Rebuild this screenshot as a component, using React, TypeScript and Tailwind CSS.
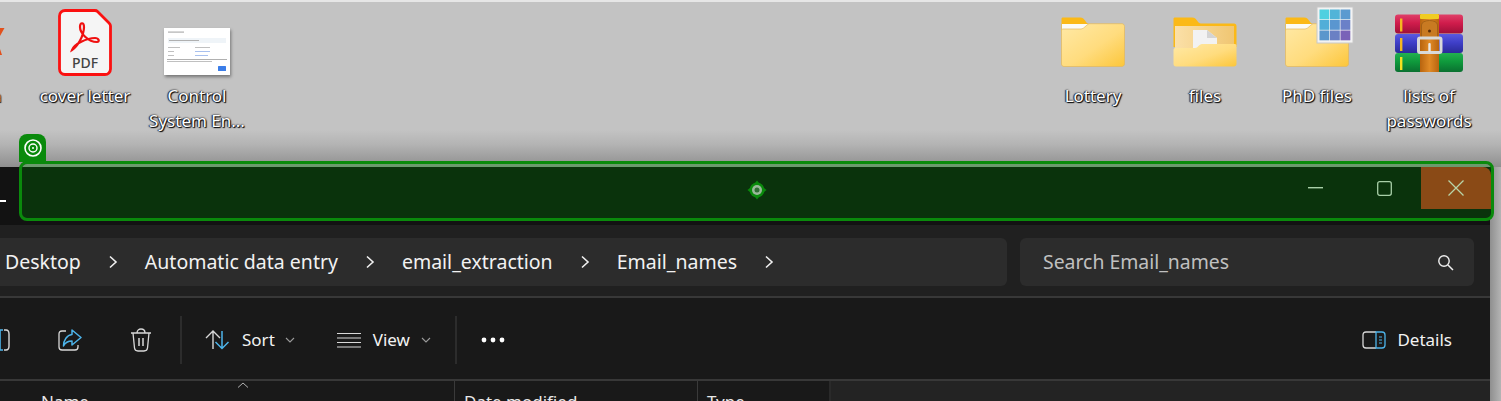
import React from "react";

const font = { fontFamily: '"Noto Sans", "Open Sans", sans-serif' };

function DesktopIcon({ icon, label }: { icon: React.ReactNode; label: string[] }) {
  return (
    <div className="flex w-[112px] shrink-0 flex-col items-center">
      <div className="flex h-[81px] items-center justify-center">{icon}</div>
      {label.map((l) => (
        <div
          key={l}
          className="h-[25px] whitespace-nowrap text-[17px] leading-[25px] text-white [text-shadow:1px_1px_1px_#000,-1px_0_1px_#223,0_0_2px_#000]"
        >
          {l}
        </div>
      ))}
    </div>
  );
}

function PdfIcon() {
  return (
    <div className="relative h-[67px] w-[54px]">
      <svg width="54" height="67" viewBox="0 0 54 67" className="absolute inset-0">
        <path d="M7 1.5H37C38 1.5 39 2 39.5 2.5L51 14C52 15 52.5 16 52.5 17V60a5.5 5.5 0 0 1-5.5 5.5H7A5.5 5.5 0 0 1 1.5 60V7A5.5 5.5 0 0 1 7 1.5Z" fill="#f5f5f5" stroke="#fb1010" strokeWidth="2.8" />
        <path d="M14 41C19 38 26 27 26 18C26 13 22 13 22 18C22 24 30 33 39 33C42 33 41 29 37 29C29 29 16 35 14 41Z" fill="none" stroke="#f01010" strokeWidth="2.2" />
      </svg>
      <span className="absolute left-0 right-0 top-[44px] text-center text-[14px] font-medium leading-[20px] text-[#444444]">PDF</span>
    </div>
  );
}

function Thumbnail() {
  return (
    <svg width="66" height="47" viewBox="0 0 66 47" className="mt-[18px] shadow-[1px_2px_3px_rgba(0,0,0,.4)]">
      <rect width="66" height="47" fill="#fff" />
      <rect x="4" y="3.5" width="16" height="1.2" fill="#b0b0b0" />
      <rect x="4" y="10" width="58" height="5" fill="#eff4f8" />
      <rect x="5" y="12" width="30" height="1" fill="#b0b0b0" />
      <rect x="4" y="19" width="12" height="1" fill="#c0c0c0" />
      <rect x="31" y="19" width="15" height="1" fill="#c0c0c0" />
      <rect x="4" y="23" width="6" height="1" fill="#c0c0c0" />
      <rect x="31" y="23" width="15" height="1" fill="#a8c0ee" />
      <rect x="4" y="27" width="6" height="1" fill="#c0c0c0" />
      <rect x="31" y="27" width="13" height="1" fill="#a8c0ee" />
      <rect x="3" y="31" width="60" height="1" fill="#b0b0b0" />
      <rect x="3" y="33" width="45" height="1" fill="#c0c0c0" />
      <rect x="54" y="38" width="8" height="5" rx="0.5" fill="#3b7de8" />
    </svg>
  );
}

function Folder({ id, inner, grid }: { id: string; inner?: boolean; grid?: boolean }) {
  return (
    <svg width="64" height="50" viewBox="0 0 64 50" className="mb-[2px] overflow-visible">
      <defs>
        <linearGradient id={id} x1="0" y1="0" x2="1" y2="1">
          <stop offset="0" stopColor="#ffe9a6" />
          <stop offset="0.55" stopColor="#ffdc7e" />
          <stop offset="1" stopColor="#fcc63a" />
        </linearGradient>
        <linearGradient id={`${id}i`} x1="0" y1="0" x2="1" y2="0">
          <stop offset="0" stopColor="#fbe0a8" />
          <stop offset="1" stopColor="#f0c672" />
        </linearGradient>
      </defs>
      {inner ? (
        <>
          <path d="M2 0.5H19C22 0.5 23 2 24 3.5C25 5 26 6.5 28 6.5H61C62.5 6.5 63.5 7.5 63.5 9V30H0.5V2C0.5 1 1 0.5 2 0.5Z" fill="#fbb917" />
          <rect x="2" y="9" width="59" height="22" fill={`url(#${id}i)`} />
          <path d="M20 13H34L44 21V31H20Z" fill="#f2f2f2" />
          <path d="M34 13L44 21H34Z" fill="#d4d4d4" />
          <path d="M0.5 33C0.5 32 1 31 2 31H22C25 31 26 27 29 27H62C63 27 63.5 28 63.5 29V47C63.5 48.5 62 49.5 61 49.5H3C1.5 49.5 0.5 48.5 0.5 47Z" fill={`url(#${id})`} />
        </>
      ) : (
        <>
          <path d="M2 0.5H19C22 0.5 23 2 24 3.5C25 5 26 6.5 28 7V14H0.5V2C0.5 1 1 0.5 2 0.5Z" fill="#fbb917" />
          <rect x="1" y="7" width="27" height="6" fill="#fbfbf6" />
          <path d="M0.5 14C0.5 13 1 12 2 12H20C23 12 25 8 28 6.7H61C62.5 6.7 63.5 8 63.5 9.5V47C63.5 48.5 62 49.5 61 49.5H3C1.5 49.5 0.5 48.5 0.5 47Z" fill={`url(#${id})`} stroke="#e2b85c" strokeWidth="0.7" />
        </>
      )}
      {grid && (
        <g transform="translate(32,-10)">
          <rect width="36" height="36" fill="#f3f3f3" stroke="#c8c8c8" />
          {[0, 1, 2].map((r) =>
            [0, 1, 2].map((c) => (
              <rect
                key={`${r}${c}`}
                x={2.5 + c * 10.5}
                y={2.5 + r * 10.5}
                width="9.8"
                height="9.8"
                fill={[["#4fd0e0", "#52b4d8", "#5a9ad0"], ["#52aed8", "#5a96d0", "#6a80c8"], ["#5a96cc", "#6a80c4", "#7a62b8"]][r][c]}
              />
            ))
          )}
        </g>
      )}
    </svg>
  );
}

function Rar() {
  const book = (y: number, g: string, s: string) => (
    <g>
      <rect x="0" y={y} width="68" height="19" rx="3" fill={`url(#${g})`} />
      <rect x="5" y={y + 4} width="2.4" height="13" fill={s} />
    </g>
  );
  const grad = (id: string, a: string, b: string, c: string) => (
    <linearGradient id={id} x1="0" y1="0" x2="0" y2="1">
      <stop offset="0" stopColor={a} />
      <stop offset="0.45" stopColor={b} />
      <stop offset="1" stopColor={c} />
    </linearGradient>
  );
  return (
    <svg width="68" height="58" viewBox="0 0 68 58">
      <defs>
        {grad("rr", "#e04068", "#d01c4c", "#a01038")}
        {grad("rb", "#5a5ae0", "#3f3fc8", "#2a2a98")}
        {grad("rg", "#22b050", "#0f9a3c", "#0a7030")}
        <linearGradient id="rbelt" x1="0" y1="0" x2="1" y2="0">
          <stop offset="0" stopColor="#b8640f" />
          <stop offset="0.5" stopColor="#e08a26" />
          <stop offset="1" stopColor="#b8640f" />
        </linearGradient>
      </defs>
      {book(0.5, "rr", "#f4b820")}
      {book(20, "rb", "#f4b820")}
      {book(39, "rg", "#f4e020")}
      <rect x="25" y="0" width="19" height="58" fill="url(#rbelt)" />
      <rect x="25" y="0" width="19" height="5" rx="1" fill="#f0cc22" />
      <path d="M26.5 24V11C26.5 5 42.5 5 42.5 11V24Z" fill="#c87a22" stroke="#9a5a14" strokeWidth="0.8" />
      <circle cx="34.5" cy="17" r="1.5" fill="#5a2c08" />
      <rect x="23.5" y="24" width="22.5" height="14.5" rx="1.5" fill="none" stroke="#d8d8d8" strokeWidth="3" />
      <rect x="33.3" y="29" width="2.4" height="9" rx="1" fill="#e8e8e8" />
    </svg>
  );
}

function Chevron() {
  return (
    <svg width="10" height="14" viewBox="0 0 10 14" className="shrink-0">
      <path d="M2 1.5L8 7L2 12.5" fill="none" stroke="#f0f0f0" strokeWidth="1.6" />
    </svg>
  );
}

function SmallChevron() {
  return (
    <svg width="10" height="6" viewBox="0 0 10 6" className="shrink-0">
      <path d="M1 1L5 5L9 1" fill="none" stroke="#9a9a9a" strokeWidth="1.1" />
    </svg>
  );
}

function Sep() {
  return <div className="h-[48px] w-[2px] shrink-0 bg-[#2c2c2c]" />;
}

export default function App() {
  return (
    <div style={font} className="relative flex h-[401px] w-[1501px] flex-col overflow-hidden bg-[linear-gradient(to_right,#8f8f8f_1490px,#b4b4b4_1501px)]">
      <div className="h-[167px] shrink-0 overflow-hidden border-t-2 border-[#e6e6e6] bg-[linear-gradient(to_bottom,#c3c3c3_0,#c3c3c3_128px,#b4b4b4_142px,#8f8f8f_165px)]">
        <div className="flex justify-between pr-[16px]">
          <div className="flex">
            <div className="relative w-[29px] shrink-0 overflow-hidden">
              <svg width="5" height="28" viewBox="0 0 5 28" className="absolute left-0 top-[26px]">
                <path d="M0 0H4.5L0 8Z M0 21L2 27H0Z" fill="#e2501c" />
              </svg>
              <span className="absolute left-[-8px] top-[81px] text-[17px] leading-[25px] text-white [text-shadow:1px_1px_1px_#000]">a</span>
            </div>
            <DesktopIcon icon={<PdfIcon />} label={["cover letter"]} />
            <DesktopIcon icon={<Thumbnail />} label={["Control", "System En..."]} />
          </div>
          <div className="flex">
            <DesktopIcon icon={<Folder id="f1" />} label={["Lottery"]} />
            <DesktopIcon icon={<Folder id="f2" inner />} label={["files"]} />
            <DesktopIcon icon={<Folder id="f3" grid />} label={["PhD files"]} />
            <DesktopIcon icon={<Rar />} label={["lists of", "passwords"]} />
          </div>
        </div>
      </div>

      <div className="flex w-[1490px] flex-1 flex-col bg-[#1c1c1c] text-[#f2f2f2]">
        <div className="flex h-[58px] shrink-0 items-center bg-[#121212]">
          <div className="mt-[10px] h-[2px] w-[6px] bg-white" />
        </div>

        <div className="flex h-[73px] shrink-0 items-start gap-[13px] border-b-2 border-[#383838] bg-[#202020] pr-[16px] pt-[13px]">
          <div className="flex h-[48px] flex-1 items-center gap-[27px] rounded-r-[6px] bg-[#2c2c2c] pl-[5px] text-[19.5px]">
            <span>Desktop</span>
            <Chevron />
            <span>Automatic data entry</span>
            <Chevron />
            <span>email_extraction</span>
            <Chevron />
            <span>Email_names</span>
            <Chevron />
          </div>
          <div className="flex h-[48px] w-[454px] items-center justify-between rounded-[6px] bg-[#2c2c2c] pl-[23px] pr-[20px] text-[19.4px] text-[#c0c0c0]">
            <span>Search Email_names</span>
            <svg width="17" height="17" viewBox="0 0 17 17">
              <circle cx="7" cy="7" r="5.2" fill="none" stroke="#f0f0f0" strokeWidth="1.4" />
              <path d="M11 11L16 16" stroke="#f0f0f0" strokeWidth="1.5" />
            </svg>
          </div>
        </div>

        <div className="flex h-[83px] shrink-0 items-center border-b-2 border-[#383838] bg-[#191919] pr-[38px] pt-[2px] text-[17px]">
          <svg width="10" height="24" viewBox="0 0 10 24" className="shrink-0">
            <path d="M3 2H0V22H3" fill="none" stroke="#4db4ea" strokeWidth="1.6" />
            <path d="M4 2H6C8 2 9 4 9 6V18C9 20 8 22 6 22H4" fill="none" stroke="#d8d8d8" strokeWidth="1.4" />
          </svg>
          <svg width="24" height="24" viewBox="0 0 24 24" className="ml-[48px] shrink-0">
            <path d="M8 3H4C2 3 1 4 1 6V19C1 21 2 22 4 22H17C19 22 20 21 20 19V17" fill="none" stroke="#d8d8d8" strokeWidth="1.3" />
            <path d="M14 2L23 9.5L14 17V13C10 13 7 15 5.5 18C5.5 12 9 7 14 6.5Z" fill="none" stroke="#4db4ea" strokeWidth="1.5" strokeLinejoin="round" />
          </svg>
          <svg width="22" height="24" viewBox="0 0 22 24" className="ml-[48px] shrink-0">
            <path d="M1 5H21M7 5C7 2 9 1 11 1C13 1 15 2 15 5M3 5L4.5 20C4.7 22 6 23 8 23H14C16 23 17.3 22 17.5 20L19 5" fill="none" stroke="#d8d8d8" strokeWidth="1.3" />
            <path d="M9 10V18M13 10V18" stroke="#d8d8d8" strokeWidth="1.5" />
          </svg>
          <div className="ml-[28px]"><Sep /></div>
          <svg width="25" height="20" viewBox="0 0 25 20" className="ml-[23px] shrink-0">
            <path d="M8 19V1.5M1 8L8 1L15 8" fill="none" stroke="#d8d8d8" strokeWidth="1.4" />
            <path d="M17 1V18.5M10.5 12L17 18.5L23.5 12" fill="none" stroke="#4db4ea" strokeWidth="1.5" />
          </svg>
          <span className="ml-[12px]">Sort</span>
          <div className="ml-[10px]"><SmallChevron /></div>
          <svg width="24" height="16" viewBox="0 0 24 16" className="ml-[42px] shrink-0">
            <path d="M0 1.5H24M0 6H24M0 10.5H24M0 15H24" stroke="#d8d8d8" strokeWidth="1.2" />
          </svg>
          <span className="ml-[12px]">View</span>
          <div className="ml-[11px]"><SmallChevron /></div>
          <div className="ml-[24px]"><Sep /></div>
          <svg width="24" height="6" viewBox="0 0 24 6" className="ml-[24px] shrink-0">
            <circle cx="3" cy="3" r="2.4" fill="#fff" />
            <circle cx="12" cy="3" r="2.4" fill="#fff" />
            <circle cx="21" cy="3" r="2.4" fill="#fff" />
          </svg>
          <div className="flex-1" />
          <svg width="24" height="18" viewBox="0 0 24 18" className="shrink-0">
            <path d="M14 1H4C2 1 1 2 1 4V14C1 16 2 17 4 17H14" fill="none" stroke="#d8d8d8" strokeWidth="1.3" />
            <path d="M14 1H20C22 1 23 2 23 4V14C23 16 22 17 20 17H14Z" fill="none" stroke="#4db4ea" strokeWidth="1.3" />
            <path d="M17 6H20M17 9H20M17 12H20" stroke="#4db4ea" strokeWidth="1.2" />
          </svg>
          <span className="ml-[11px]">Details</span>
        </div>

        <div className="flex flex-1 overflow-hidden bg-[#232323] text-[17px] leading-[24px] text-[#e8e8e8]">
          <div className="relative w-[455px] shrink-0 border-r border-[#3a3a3a] bg-[#191919] pl-[41px] pt-[9px]">
            Name
            <svg width="12" height="6" viewBox="0 0 12 6" className="absolute left-[237px] top-[1px]">
              <path d="M1 5.5L6 1L11 5.5" fill="none" stroke="#b0b0b0" strokeWidth="1" />
            </svg>
          </div>
          <div className="w-[243px] shrink-0 border-r border-[#3a3a3a] bg-[#191919] pl-[9px] pt-[9px]">Date modified</div>
          <div className="w-[133px] shrink-0 border-r-2 border-[#2a2a2a] bg-[#191919] pl-[9px] pt-[9px]">Type</div>
        </div>
      </div>

      <div className="absolute left-[19px] top-[134px] flex h-[28px] w-[27px] items-center justify-center rounded-t-[8px] bg-[#0a8a0c]">
        <svg width="20" height="20" viewBox="0 0 20 20">
          <circle cx="10" cy="10" r="8" fill="none" stroke="#fff" strokeWidth="1.6" />
          <circle cx="10" cy="10" r="4" fill="none" stroke="#fff" strokeWidth="1.4" />
          <circle cx="10" cy="10" r="1" fill="#fff" />
        </svg>
      </div>

      <div className="absolute left-[19px] top-[161px] flex h-[60px] w-[1475px] flex-col overflow-hidden rounded-[8px] border-[3px] border-[#0a8a0c] bg-[#0a330c]">
        <div className="h-[3px] shrink-0 bg-[#6c9a6e]" />
        <div className="flex flex-1 items-start justify-end">
          <svg width="15" height="2" viewBox="0 0 15 2" className="mr-[54px] mt-[20px]">
            <rect width="15" height="1.4" fill="#a8cfa8" />
          </svg>
          <svg width="15" height="15" viewBox="0 0 15 15" className="mr-[29px] mt-[14px]">
            <rect x="0.7" y="0.7" width="13.6" height="13.6" rx="2" fill="none" stroke="#a8cfa8" strokeWidth="1.3" />
          </svg>
          <div className="flex h-[42px] w-[70px] items-center justify-center rounded-tr-[8px] bg-[#8a4a16]">
            <svg width="16" height="16" viewBox="0 0 16 16">
              <path d="M0.5 0.5L15.5 15.5M15.5 0.5L0.5 15.5" stroke="#b8d4a8" strokeWidth="1.3" />
            </svg>
          </div>
        </div>
      </div>

      <svg width="20" height="20" viewBox="0 0 20 20" className="absolute left-[747px] top-[180px]">
        <path d="M10 0.5L12 3H8ZM10 19.5L8 17H12ZM0.5 10L3 8V12ZM19.5 10L17 12V8Z" fill="#0a8a0c" />
        <circle cx="10" cy="10" r="7.5" fill="#0a8a0c" />
        <circle cx="10" cy="10" r="5" fill="#9ab89a" />
        <circle cx="10" cy="10" r="2.5" fill="#2f6e34" />
      </svg>
    </div>
  );
}
